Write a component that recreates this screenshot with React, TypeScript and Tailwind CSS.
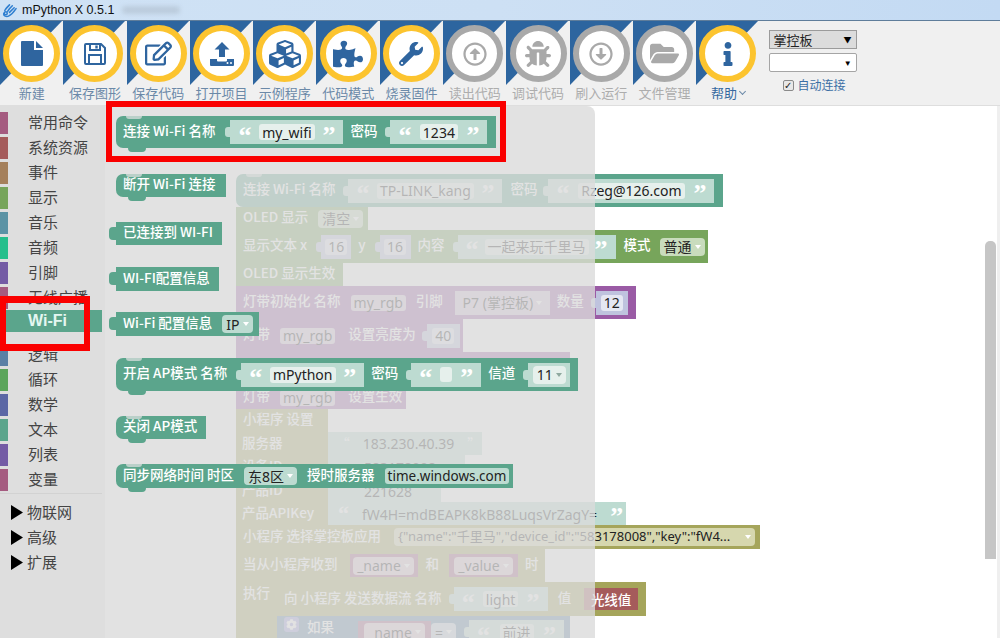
import type { ReactNode } from "react";
import {
  FaRegEdit,
  FaCubes,
  FaPuzzlePiece,
  FaWrench,
  FaRegArrowAltCircleUp,
  FaBug,
  FaRegArrowAltCircleDown,
  FaFolderOpen,
  FaInfo,
  FaCog,
} from "react-icons/fa";

const cjk = "font-['Noto_Sans_CJK_SC','Liberation_Sans',sans-serif]";

const fileIcon = (
  <svg width="22" height="25" viewBox="0 0 22 25" fill="currentColor">
    <path d="M1 0h12v9h9v15a1 1 0 0 1-1 1H1a1 1 0 0 1-1-1V1a1 1 0 0 1 1-1z" />
    <path d="M15 0l7 7h-7z" />
  </svg>
);

const saveIcon = (
  <svg width="22" height="22" viewBox="0 0 22 22" fill="none" stroke="currentColor" strokeWidth="2">
    <path d="M2 1h15l4 4v15a1 1 0 0 1-1 1H2a1 1 0 0 1-1-1V2a1 1 0 0 1 1-1z" />
    <path d="M6 1v6h10V1M5 21v-9h12v9" />
    <path d="M12.5 2.5v3" strokeWidth="2.4" />
  </svg>
);

const uploadIcon = (
  <svg width="24" height="24" viewBox="0 0 24 24" fill="currentColor">
    <path d="M12 0l7.5 7.5H15V15H9V7.5H4.5z" />
    <path d="M0 17h7v1.5a1 1 0 0 0 1 1h8a1 1 0 0 0 1-1V17h7v6a1 1 0 0 1-1 1H1a1 1 0 0 1-1-1z" />
    <circle cx="17.5" cy="21" r="1" fill="#fff" />
    <circle cx="21" cy="21" r="1" fill="#fff" />
  </svg>
);

const tools = [
  { label: "新建", icon: fileIcon },
  { label: "保存图形", icon: saveIcon },
  { label: "保存代码", icon: <FaRegEdit size={27} /> },
  { label: "打开项目", icon: uploadIcon },
  { label: "示例程序", icon: <FaCubes size={32} /> },
  { label: "代码模式", icon: <FaPuzzlePiece size={30} /> },
  { label: "烧录固件", icon: <FaWrench size={24} /> },
  { label: "读出代码", icon: <FaRegArrowAltCircleUp size={24} />, off: true },
  { label: "调试代码", icon: <FaBug size={26} />, off: true },
  { label: "刷入运行", icon: <FaRegArrowAltCircleDown size={24} />, off: true },
  { label: "文件管理", icon: <FaFolderOpen size={29} />, off: true },
  { label: "帮助", icon: <FaInfo size={24} />, help: true },
];

const cats = [
  { name: "常用命令", color: "bg-[#a55b80]" },
  { name: "系统资源", color: "bg-[#a55b5b]" },
  { name: "事件", color: "bg-[#a5805b]" },
  { name: "显示", color: "bg-[#77a55b]" },
  { name: "音乐", color: "bg-[#5b93a5]" },
  { name: "音频", color: "bg-[#25bf8c]" },
  { name: "引脚", color: "bg-[#745ba5]" },
  { name: "无线广播", color: "bg-[#a55b80]" },
];

const cats2 = [
  { name: "逻辑", color: "bg-[#5b80a5]" },
  { name: "循环", color: "bg-[#5ba55b]" },
  { name: "数学", color: "bg-[#5b67a5]" },
  { name: "文本", color: "bg-[#5ba58c]" },
  { name: "列表", color: "bg-[#745ba5]" },
  { name: "变量", color: "bg-[#a55b80]" },
];

function ToolButton({ label, icon, off, help }: { label: string; icon: ReactNode; off?: boolean; help?: boolean }) {
  return (
    <div className="relative flex h-full w-[63.3px] shrink-0 flex-col items-center">
      <svg className="absolute left-0 top-0" width="62" height="64" viewBox="0 0 62 64">
        <polygon points="0,0 62,0 0,64" fill="#2d659f" />
      </svg>
      <div
        className={`relative mt-[4px] flex h-[57px] w-[57px] items-center justify-center rounded-full border-[6px] bg-white ${
          off ? "border-[#a9a9a9] text-[#a9a9a9]" : "border-[#fcc42f] text-[#2f659f]"
        }`}
      >
        {icon}
      </div>
      <div
        className={`mt-[2px] flex h-[18px] items-center whitespace-nowrap text-[13px] ${cjk} ${
          off ? "text-[#adadad]" : help ? "text-[#35689f]" : "text-[#6b89a8]"
        }`}
      >
        {label}
        {help && <span className="ml-[3px] mt-[-4px] h-[5px] w-[5px] rotate-45 border-b border-r border-[#6b89a8]" />}
      </div>
    </div>
  );
}

function CatRow({ name, color }: { name: string; color: string }) {
  return (
    <div className="flex h-[25px] items-center">
      <div className={`h-[22px] w-[8px] ${color}`} />
      <div className={`ml-[20px] text-[15px] text-[#444] ${cjk}`}>{name}</div>
    </div>
  );
}

function FoldRow({ name }: { name: string }) {
  return (
    <div className="flex h-[25px] items-center pl-[11px]">
      <svg width="12" height="15" viewBox="0 0 12 15">
        <polygon points="0,0 12,7.5 0,15" fill="#000" />
      </svg>
      <div className={`ml-[4px] text-[15px] text-[#444] ${cjk}`}>{name}</div>
    </div>
  );
}

// label text inside a block, sits a little above the block's middle
function L({ children, className = "" }: { children: ReactNode; className?: string }) {
  return <span className={`pb-[4px] ${className}`}>{children}</span>;
}

// one block on the workspace, placed through className
function Blk({
  className,
  color,
  children,
  hat,
  out,
}: {
  className: string;
  color: string;
  children?: ReactNode;
  hat?: boolean;
  out?: boolean;
}) {
  return (
    <div
      className={`absolute flex items-center gap-[10px] whitespace-nowrap pl-[7px] text-[13.5px] font-medium text-white ${cjk} ${color} ${className} ${
        hat ? "rounded-l-[7px]" : ""
      }`}
    >
      {out && <span className={`absolute left-[-7px] top-[5px] h-[13px] w-[7px] rounded-l-[4px] ${color}`} />}
      {hat && (
        <>
          <span className="absolute left-[10px] top-0 h-[3px] w-[16px] rounded-b-[8px] bg-[#e2e2e2]/70" />
          <span className={`absolute bottom-[-4px] left-[12px] h-[4px] w-[18px] rounded-b-[9px] ${color}`} />
        </>
      )}
      {children}
    </div>
  );
}

function Field({ text, className, size = "text-[14px]" }: { text: string; className: string; size?: string }) {
  return (
    <span
      className={`flex h-[16px] items-center justify-center rounded-[3px] px-[3px] font-normal font-['Noto_Sans','Noto_Sans_CJK_SC',sans-serif] ${size} ${className}`}
    >
      {text}
    </span>
  );
}

function Drop({
  text,
  className,
  arrow = "#ffffff",
  size = "text-[14px]",
}: {
  text: string;
  className: string;
  arrow?: string;
  size?: string;
}) {
  return (
    <span
      className={`flex h-[18px] items-center justify-between gap-[3px] rounded-[4px] px-[4px] font-normal font-['Noto_Sans','Noto_Sans_CJK_SC',sans-serif] ${size} ${className}`}
    >
      <span>{text}</span>
      <svg width="6" height="4" viewBox="0 0 6 4" className="shrink-0">
        <polygon points="0,0 6,0 3,4" fill={arrow} />
      </svg>
    </span>
  );
}

function Str({ text, className }: { text: string; className: string }) {
  return (
    <span className={`relative flex h-[24px] shrink-0 items-center justify-between px-[8px] bg-[#bddbd1] ${className}`}>
      <span className="absolute left-[-5px] top-[7px] h-[10px] w-[5px] rounded-l-[3px] bg-[#bddbd1]" />
      <span className="mt-[7px] font-['Liberation_Serif',serif] text-[26px] font-bold leading-none text-white">“</span>
      {text ? (
        <Field text={text} className="bg-[#e6f0ec] text-[#222]" />
      ) : (
        <span className="h-[15px] w-[12px] rounded-[3px] bg-[#e6f0ec]" />
      )}
      <span className="mt-[7px] font-['Liberation_Serif',serif] text-[26px] font-bold leading-none text-white">”</span>
    </span>
  );
}

function Num({ text, className }: { text: string; className: string }) {
  return (
    <span className={`relative flex h-[24px] shrink-0 items-center justify-center bg-[#bfc3de] ${className}`}>
      <span className="absolute left-[-5px] top-[7px] h-[10px] w-[5px] rounded-l-[3px] bg-[#bfc3de]" />
      <Field text={text} className="bg-[#e5e7f2] text-[#222]" />
    </span>
  );
}

function Workspace() {
  return (
    <>
      <Blk hat color="bg-[#5ba58c]" className="left-[131px] top-[68px] h-[33px] w-[487px]">
        <L>连接 Wi-Fi 名称</L>
        <Str text="TP-LINK_kang" className="ml-[3px] w-[154px]" />
        <L className="-ml-[2px]">密码</L>
        <Str text="Rzeg@126.com" className="ml-[1px] w-[166px]" />
      </Blk>
      <Blk color="bg-[#77a55b]" className="left-[131px] top-[101px] h-[23px] w-[132px]">
        <L>OLED 显示</L>
        <Drop text="清空" className="bg-[#c9dcbd] text-[#222]" />
      </Blk>
      <Blk color="bg-[#77a55b]" className="left-[131px] top-[124px] h-[33px] w-[472px]">
        <L>显示文本 x</L>
        <Num text="16" className="ml-[4px] w-[30px]" />
        <L className="-ml-[3px]">y</L>
        <Num text="16" className="ml-[4px] w-[31px]" />
        <L className="-ml-[3px]">内容</L>
        <Str text="一起来玩千里马" className="ml-[3px] w-[158px]" />
        <L className="-ml-[2px]">模式</L>
        <Drop text="普通" className="-ml-[1px] bg-[#c9dcbd] text-[#222]" />
      </Blk>
      <Blk color="bg-[#77a55b]" className="left-[131px] top-[157px] h-[23px] w-[107px]">
        <L>OLED 显示生效</L>
      </Blk>
      <Blk color="bg-[#9a5ba5]" className="left-[131px] top-[180px] h-[33px] w-[400px]">
        <L>灯带初始化 名称</L>
        <Field text="my_rgb" className="bg-[#d9c6dd] text-[#222]" />
        <L>引脚</L>
        <span className="ml-[2px] flex h-[24px] w-[95px] shrink-0 items-center justify-center bg-[#d5c2da]">
          <Drop text="P7 (掌控板)" className="px-0 text-[#222]" />
        </span>
        <L className="-ml-[3px]">数量</L>
        <Num text="12" className="ml-[2px] w-[32px]" />
      </Blk>
      <Blk color="bg-[#9a5ba5]" className="left-[131px] top-[213px] h-[33px] w-[227px]">
        <L>灯带</L>
        <Field text="my_rgb" className="bg-[#d9c6dd] text-[#222]" />
        <L className="ml-[3px]">设置亮度为</L>
        <Num text="40" className="ml-[1px] w-[33px]" />
      </Blk>
      <Blk color="bg-[#9a5ba5]" className="left-[131px] top-[246px] h-[34px] w-[334px]" />
      <Blk color="bg-[#9a5ba5]" className="left-[131px] top-[280px] h-[23px] w-[170px]">
        <L>灯带</L>
        <Field text="my_rgb" className="bg-[#d9c6dd] text-[#222]" />
        <L className="ml-[3px]">设置生效</L>
      </Blk>

      <Blk color="bg-[#a5a55b]" className="left-[131px] top-[303px] h-[23px] w-[92px]">
        <L>小程序 设置</L>
      </Blk>
      <Blk color="bg-[#a5a55b]" className="left-[131px] top-[326px] h-[94px] w-[92px]" />
      <Blk color="bg-[#bddbd1]" className="left-[223px] top-[326px] h-[23px] w-[154px] justify-center pl-0 text-[#222]">
        <span className="text-white">“</span>
        <Field text="183.230.40.39" className="text-[#222]" />
        <span className="text-white">”</span>
      </Blk>
      <Blk color="bg-[#bddbd1]" className="left-[223px] top-[349px] h-[24px] w-[137px] justify-center pl-0">
        <Field text="583178008" className="text-[#222]" />
      </Blk>
      <Blk color="bg-[#bddbd1]" className="left-[223px] top-[373px] h-[24px] w-[113px] justify-center pl-0">
        <Field text="221628" className="text-[#222]" />
      </Blk>
      <Blk color="bg-[#bddbd1]" className="left-[223px] top-[396px] h-[24px] w-[298px] justify-center gap-[6px] pl-0">
        <span className="font-['Liberation_Serif',serif] text-[22px] font-bold leading-none text-white">“</span>
        <Field text="fW4H=mdBEAPK8kB88LuqsVrZagY=" className="text-[#222]" />
        <span className="mt-[6px] font-['Liberation_Serif',serif] text-[26px] font-bold leading-none text-white">”</span>
      </Blk>
      <div className={`absolute left-[137px] top-[326px] flex h-[94px] flex-col text-[13.5px] font-medium text-white ${cjk}`}>
        <span className="flex h-[23.5px] items-center pb-[4px]">服务器</span>
        <span className="flex h-[23.5px] items-center pb-[4px]">设备ID</span>
        <span className="flex h-[23.5px] items-center pb-[4px]">产品ID</span>
        <span className="flex h-[23.5px] items-center pb-[4px]">产品APIKey</span>
      </div>
      <Blk color="bg-[#a5a55b]" className="left-[131px] top-[419px] h-[24px] w-[524px]">
        <L>小程序 选择掌控板应用</L>
        <Drop
          text={'{"name":"千里马","device_id":"583178008","key":"fW4...'}
          size="text-[13px]"
          className="ml-[3px] w-[361px] bg-[#d6d7ae] text-[#222]"
        />
      </Blk>
      <Blk color="bg-[#a5a55b]" className="left-[131px] top-[443px] h-[33px] w-[309px]">
        <L>当从小程序收到</L>
        <span className="ml-[2px] flex h-[23px] w-[68px] shrink-0 items-center justify-center bg-[#a55b80]">
          <Drop text="_name" className="bg-[#dfc5d2] text-[#222]" />
        </span>
        <L className="-ml-[2px]">和</L>
        <span className="flex h-[23px] w-[69px] shrink-0 items-center justify-center bg-[#a55b80]">
          <Drop text="_value" className="bg-[#dfc5d2] text-[#222]" />
        </span>
        <L className="-ml-[3px]">时</L>
      </Blk>
      <Blk color="bg-[#a5a55b]" className="left-[131px] top-[476px] h-[57px] w-[41px] items-start">
        执行
      </Blk>
      <Blk color="bg-[#a5a55b]" className="left-[172px] top-[476px] h-[34px] w-[369px]">
        <L>向 小程序 发送数据流 名称</L>
        <Str text="light" className="ml-[2px] w-[94px]" />
        <L>值</L>
        <span className="ml-[3px] flex h-[22px] w-[54px] shrink-0 items-center justify-center bg-[#a55b5b]">光线值</span>
      </Blk>
      <Blk color="bg-[#5b80a5]" className="left-[172px] top-[510px] h-[32px] w-[293px]">
        <span className="mb-[16px] flex h-[15px] w-[15px] shrink-0 items-center justify-center rounded-[3px] bg-[#9b9be0]">
          <FaCog size={11} />
        </span>
        <span className="-ml-[2px] mb-[12px]">如果</span>
        <span className="ml-[14px] flex h-[22px] w-[73px] shrink-0 items-center justify-center bg-[#a55b80]">
          <Drop text="_name" className="bg-[#dfc5d2] text-[#222]" />
        </span>
        <Drop text="=" className="-ml-[10px] bg-[#c5d3e2] text-[#222]" />
        <Str text="前进" className="ml-[3px] w-[95px]" />
      </Blk>
    </>
  );
}

function Flyout() {
  return (
    <>
      <Blk hat color="bg-[#5ba58c]" className="left-[11px] top-[10px] h-[32px] w-[380px]">
        <L>连接 Wi-Fi 名称</L>
        <Str text="my_wifi" className="ml-[5px] w-[113px]" />
        <L className="-ml-[3px]">密码</L>
        <Str text="1234" className="ml-[3px] w-[97px]" />
      </Blk>
      <Blk hat color="bg-[#5ba58c]" className="left-[11px] top-[68px] h-[23px] w-[110px]">
        <L>断开 Wi-Fi 连接</L>
      </Blk>
      <Blk out color="bg-[#5ba58c]" className="left-[11px] top-[116px] h-[23px] w-[106px]">
        <L>已连接到 WI-FI</L>
      </Blk>
      <Blk out color="bg-[#5ba58c]" className="left-[11px] top-[161px] h-[24px] w-[103px]">
        <L>WI-FI配置信息</L>
      </Blk>
      <Blk out color="bg-[#5ba58c]" className="left-[11px] top-[206px] h-[24px] w-[143px]">
        <L>Wi-Fi 配置信息</L>
        <Drop text="IP" className="bg-[#bddbd1] text-[#222]" />
      </Blk>
      <Blk hat color="bg-[#5ba58c]" className="left-[11px] top-[252px] h-[33px] w-[462px]">
        <L>开启 AP模式 名称</L>
        <Str text="mPython" className="ml-[4px] w-[123px]" />
        <L className="-ml-[3px]">密码</L>
        <Str text="" className="ml-[3px] w-[70px]" />
        <L className="-ml-[3px]">信道</L>
        <span className="relative ml-[3px] flex h-[24px] w-[42px] shrink-0 items-center justify-center bg-[#bddbd1]">
          <span className="absolute left-[-5px] top-[7px] h-[10px] w-[5px] rounded-l-[3px] bg-[#bddbd1]" />
          <Drop text="11" arrow="#8fa89f" className="bg-[#e6f0ec] px-[2px] text-[#222]" />
        </span>
      </Blk>
      <Blk hat color="bg-[#5ba58c]" className="left-[11px] top-[310px] h-[23px] w-[90px]">
        <L>关闭 AP模式</L>
      </Blk>
      <Blk hat color="bg-[#5ba58c]" className="left-[11px] top-[358px] h-[24px] w-[397px]">
        <L>同步网络时间 时区</L>
        <Drop text="东8区" className="bg-[#bddbd1] text-[#222]" />
        <L>授时服务器</L>
        <Field text="time.windows.com" size="text-[13.5px]" className="bg-[#bddbd1] text-[#222]" />
      </Blk>
    </>
  );
}

export default function App() {
  return (
    <div className="flex h-[638px] w-[1000px] flex-col overflow-hidden bg-white">
      {/* title bar */}
      <div className="flex h-[20px] shrink-0 items-center bg-gradient-to-r from-[#cfe2f5] via-[#cde0f4] to-[#c3daf3] pl-[2px]">
        <svg width="15" height="15" viewBox="0 0 16 16" fill="none" stroke="#2f7fd0" strokeWidth="1.6" strokeLinecap="round">
          <path d="M2 11c-1 3 3 4 5 3s6-5 8-8" />
          <path d="M3 8c1-2 3-4 5-6M6 9c1-2 3-4 5-6M8 10c1-1 3-3 5-5" />
          <circle cx="4" cy="11" r="1.6" />
        </svg>
        <span className="ml-[5px] font-['Liberation_Sans',sans-serif] text-[12.5px] text-[#111]">mPython X 0.5.1</span>
        <span className="ml-[8px] h-[8px] w-[58px] rounded-sm bg-[#a9b8c6]/50 blur-[2px]" />
      </div>

      {/* toolbar */}
      <div className="flex h-[85px] shrink-0 border-t border-[#5f7d9b] bg-[#f0f0f0]">
        {tools.map((t) => (
          <ToolButton key={t.label} {...t} />
        ))}
        <div className="ml-[9px] flex w-[88px] flex-col pt-[9px]">
          <div className={`flex h-[19px] items-center justify-between border border-[#9b9b9b] bg-[#dcdcdc] pl-[4px] pr-[4px] text-[13px] text-[#222] ${cjk}`}>
            掌控板
            <span className="text-[8px] text-black">▼</span>
          </div>
          <div className="mt-[4px] flex h-[19px] items-center justify-end rounded-[2px] border border-[#a5a5a5] bg-white pr-[4px]">
            <span className="text-[8px] text-black">▼</span>
          </div>
          <div className="mt-[4px] flex items-center pl-[14px]">
            <span className="flex h-[11px] w-[11px] items-center justify-center rounded-[2px] border border-[#8a8a8a] bg-[#e8e8e8] text-[10px] leading-none text-[#222]">
              ✓
            </span>
            <span className={`ml-[4px] text-[12px] text-[#3c6fa5] ${cjk}`}>自动连接</span>
          </div>
        </div>
      </div>

      {/* body */}
      <div className="relative flex min-h-0 flex-1 border-t border-[#dedede]">
        <div className="w-[105px] shrink-0 bg-[#dedede] pt-[4px]">
          {cats.map((c) => (
            <CatRow key={c.name} {...c} />
          ))}
          <div className="mr-[3px] flex h-[22px] items-center bg-[#5ba58c] pl-[28px] font-['Liberation_Sans',sans-serif] text-[16px] font-bold text-[#e4f7f1]">
            Wi-Fi
          </div>
          <div className="h-[10px]" />
          {cats2.map((c) => (
            <CatRow key={c.name} {...c} />
          ))}
          <div className="mr-[3px] mt-[1px] h-px bg-[#d2d2d2]" />
          <div className="mt-[6px]">
            <FoldRow name="物联网" />
            <FoldRow name="高级" />
            <FoldRow name="扩展" />
          </div>
        </div>

        <div className="relative flex-1">
          <Workspace />
          {/* flyout sits over the workspace */}
          <div className="absolute left-0 top-0 h-full w-[490px] rounded-tr-[8px] bg-[#dbdbdb]/80" />
          <Flyout />
          {/* scrollbar */}
          <div className="absolute right-[4px] top-[135px] h-[318px] w-[11px] rounded-t-[5px] bg-[#c6c6c6]" />
          <div className="absolute right-0 top-0 h-full w-[3px] bg-[#efefef]" />
        </div>

        {/* annotation frames */}
        <div className="absolute left-[106px] top-[-5px] h-[61px] w-[400px] border-[6px] border-[#fa0000]" />
        <div className="absolute left-0 top-[190px] h-[55px] w-[90px] border-x-[6px] border-y-[7px] border-[#fa0000]" />
      </div>
    </div>
  );
}
